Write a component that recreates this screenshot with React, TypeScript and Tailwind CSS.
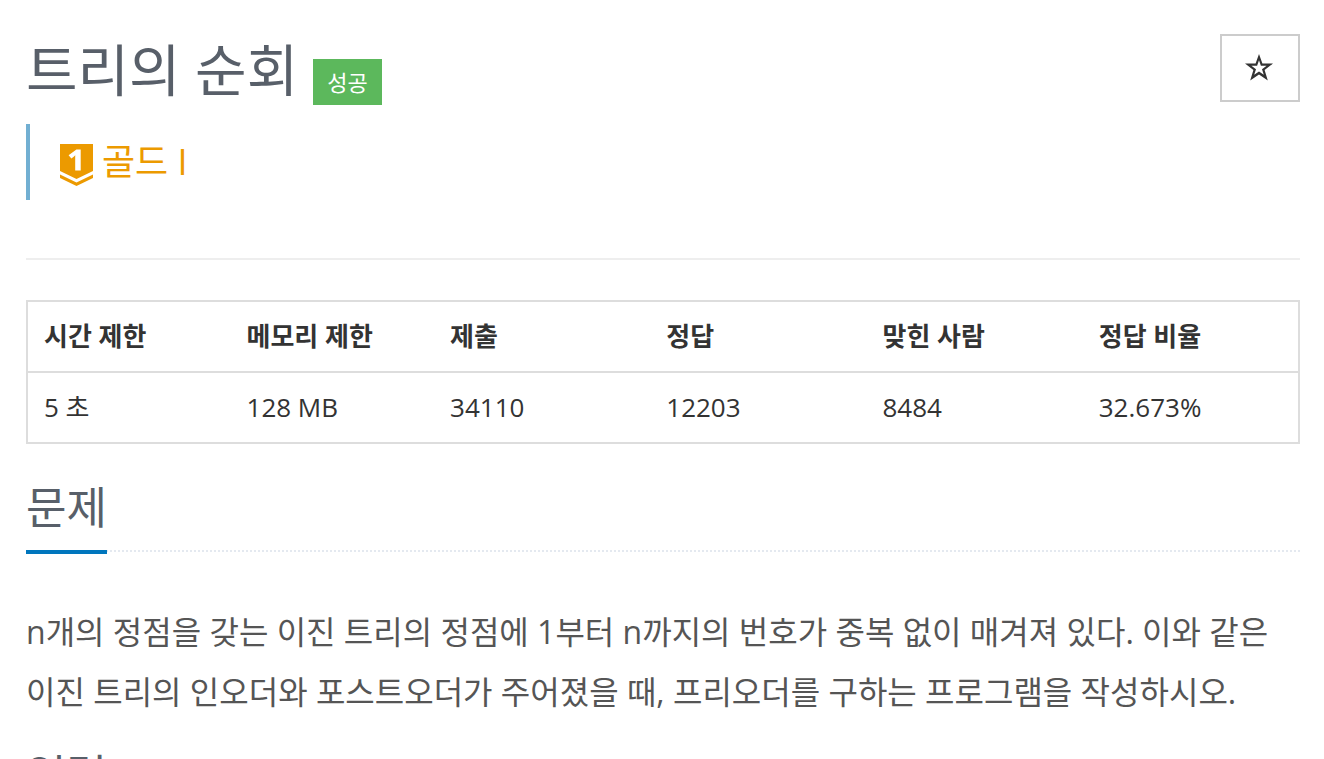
import { useState } from "react";

const limits = [
  { title: "시간 제한", value: "5 초", width: "w-[16%]" },
  { title: "메모리 제한", value: "128 MB", width: "w-[16%]" },
  { title: "제출", value: "34110", width: "w-[17%]" },
  { title: "정답", value: "12203", width: "w-[17%]" },
  { title: "맞힌 사람", value: "8484", width: "w-[17%]" },
  { title: "정답 비율", value: "32.673%", width: "w-[17%]" },
];

function TierIcon() {
  return (
    <svg viewBox="0 0 33 42" className="w-[33px] h-[42px]" aria-hidden="true">
      <path d="M0 0H33V27L16.5 35L0 27Z" fill="#ec9a00" />
      <path d="M0 30.5L16.5 38.5L33 30.5V34L16.5 42L0 34Z" fill="#ec9a00" />
      <path d="M16.4 5.5H20.7V26.5H15.2V13.5Q15.2 12.3 15.3 11.2Q14.8 11.8 14 12.5L11.4 14.6L8.6 11.3Z" fill="#fff" />
    </svg>
  );
}

function StarButton() {
  const [starred, setStarred] = useState(false);

  return (
    <button
      type="button"
      aria-label="즐겨찾기"
      aria-pressed={starred}
      onClick={() => setStarred(!starred)}
      className="flex items-center justify-center w-20 h-[68px] pr-[2px] border-2 border-[#ccc] bg-white cursor-pointer"
    >
      <svg viewBox="0 0 28 28" className="size-7" aria-hidden="true">
        {/* outer star with the inner one cut out */}
        <path
          d="M14 0L17.4 9.6H28L19.6 16L22.8 26.4L14 20.4L5.2 26.4L8.4 16L0 9.6H10.6Z"
          fill="#333"
        />
        {!starred && (
          <path
            d="M14 6.2L15.9 11.8H21.6L17 15.2L18.8 20.7L14 17.4L9.2 20.7L11 15.2L6.4 11.8H12.1Z"
            fill="#fff"
          />
        )}
      </svg>
    </button>
  );
}

function Headline({ title }: { title: string }) {
  return (
    <div className="flex border-b-2 border-dotted border-[#e4e9f0]">
      <h2 className="-mb-1 pb-3 border-b-4 border-[#0076bd] text-[44px] leading-[62px] text-[#585f69]">
        {title}
      </h2>
    </div>
  );
}

function App() {
  return (
    <main className="pl-[26px] pr-6 pt-[34px] bg-white text-[#333] font-['Open_Sans','Noto_Sans_CJK_KR',sans-serif]">
      {/* Title */}
      <header className="flex items-start justify-between">
        <div className="flex items-end gap-[15px] pb-[19px]">
          <h1 className="text-[56px] leading-[71px] text-[#585f69]">트리의 순회</h1>
          <span className="px-[14px] bg-[#5cb85c] text-[22px] leading-[46px] text-white">성공</span>
        </div>
        <StarButton />
      </header>

      {/* Tier */}
      <blockquote className="flex items-center gap-[9px] h-[76px] pl-[30px] border-l-4 border-[#72afd2] text-4xl text-[#ec9a00]">
        <span className="pt-[6px]">
          <TierIcon />
        </span>
        <span>골드 I</span>
      </blockquote>

      <hr className="mt-[58px] mb-10 border-t-2 border-[#eee]" />

      <table className="w-full table-fixed border-collapse border-2 border-[#ddd] text-[26px] leading-[37px] text-left">
        <thead>
          <tr className="border-b-2 border-[#ddd]">
            {limits.map((item) => (
              <th key={item.title} className={`${item.width} p-4 font-bold`}>{item.title}</th>
            ))}
          </tr>
        </thead>
        <tbody>
          <tr>
            {limits.map((item) => (
              <td key={item.title} className="p-4">{item.value}</td>
            ))}
          </tr>
        </tbody>
      </table>

      {/* Problem */}
      <section className="mt-8">
        <Headline title="문제" />
        <p className="mt-[50px] text-[32px] leading-[60px] text-[#555]">
          n개의 정점을 갖는 이진 트리의 정점에 1부터 n까지의 번호가 중복 없이 매겨져 있다. 이와 같은 이진 트리의 인오더와 포스트오더가 주어졌을 때, 프리오더를 구하는 프로그램을 작성하시오.
        </p>
      </section>

      {/* Input */}
      <section className="mt-[22px]">
        <Headline title="입력" />
      </section>
    </main>
  );
}

export default App;
